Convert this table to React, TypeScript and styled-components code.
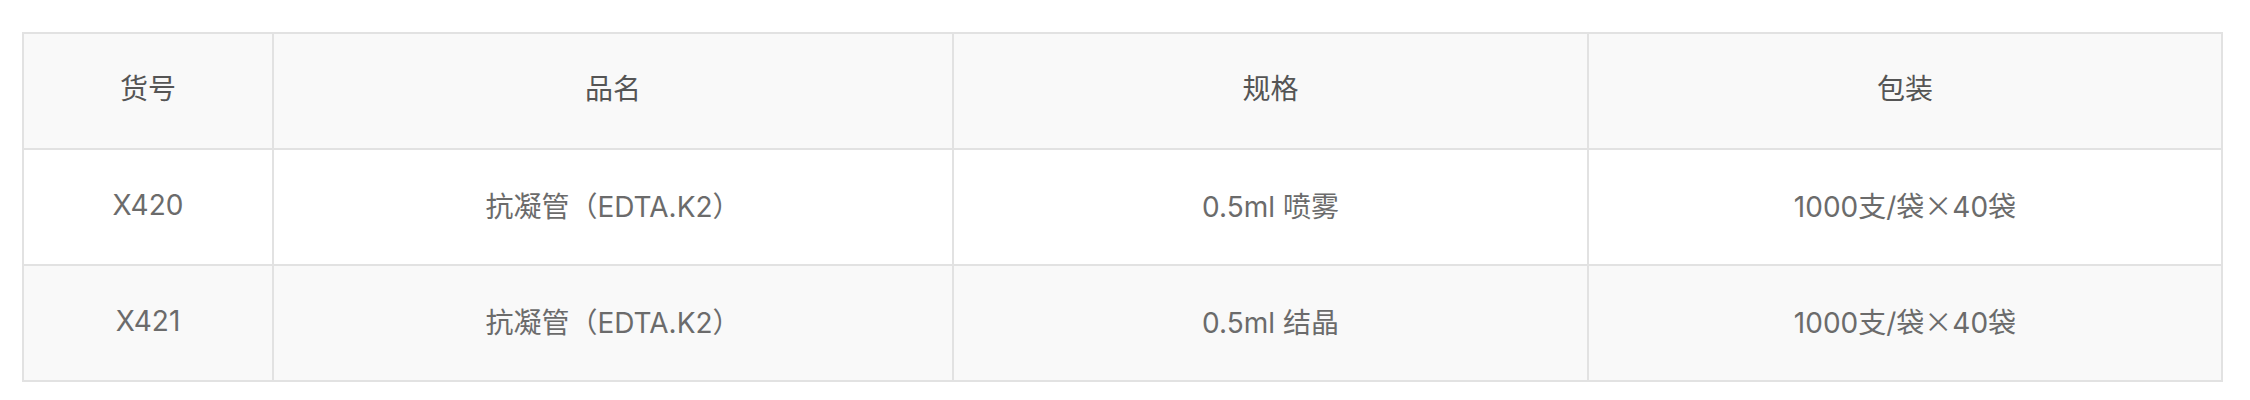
import React from 'react';
import styled, { createGlobalStyle } from 'styled-components';

const GlobalStyle = createGlobalStyle`
  body {
    margin: 0;
    background: #ffffff;
    font-family: Inter, "Noto Sans CJK SC", sans-serif;
  }
`;

const Page = styled.div`
  padding: 32px 0 0 22px;
`;

const Grid = styled.div`
  display: grid;
  grid-template-columns: 250px 680px 635px 634px;
  width: 2201px;
  border-top: 2px solid #e2e2e2;
  border-left: 2px solid #e2e2e2;
  box-sizing: border-box;
`;

const Cell = styled.div<{ $head?: boolean; $shade?: boolean }>`
  box-sizing: border-box;
  height: 116px;
  display: flex;
  align-items: center;
  justify-content: center;
  border-right: 2px solid #e2e2e2;
  border-bottom: 2px solid #e2e2e2;
  background: ${(p) => (p.$shade ? '#f9f9f9' : '#ffffff')};
  color: ${(p) => (p.$head ? '#555555' : '#6b6b6b')};
  font-size: 28px;
  white-space: pre;
  padding-bottom: ${(p) => (p.$head ? '9px' : '5px')};
`;

// the multiplication sign is the wide CJK one in the screenshot
const Times = styled.span`
  font-family: "Noto Sans CJK SC", sans-serif;
`;

const headers = ['货号', '品名', '规格', '包装'];

const rows = [
  ['X420', '抗凝管（EDTA.K2）', '0.5ml 喷雾', '1000支/袋×40袋'],
  ['X421', '抗凝管（EDTA.K2）', '0.5ml 结晶', '1000支/袋×40袋'],
];

const renderText = (val: string) => {
  if (!val.includes('×')) return val;
  const parts = val.split('×');
  return (
    <>
      {parts[0]}
      <Times>×</Times>
      {parts[1]}
    </>
  );
};

const App: React.FC = () => {
  return (
    <>
      <GlobalStyle />
      <Page>
        <Grid>
          {headers.map((h) => (
            <Cell key={h} $head $shade>
              {h}
            </Cell>
          ))}
          {rows.map((row, i) =>
            row.map((val, j) => (
              <Cell key={`${i}-${j}`} $shade={i % 2 === 1}>
                {renderText(val)}
              </Cell>
            ))
          )}
        </Grid>
      </Page>
    </>
  );
};

export default App;
